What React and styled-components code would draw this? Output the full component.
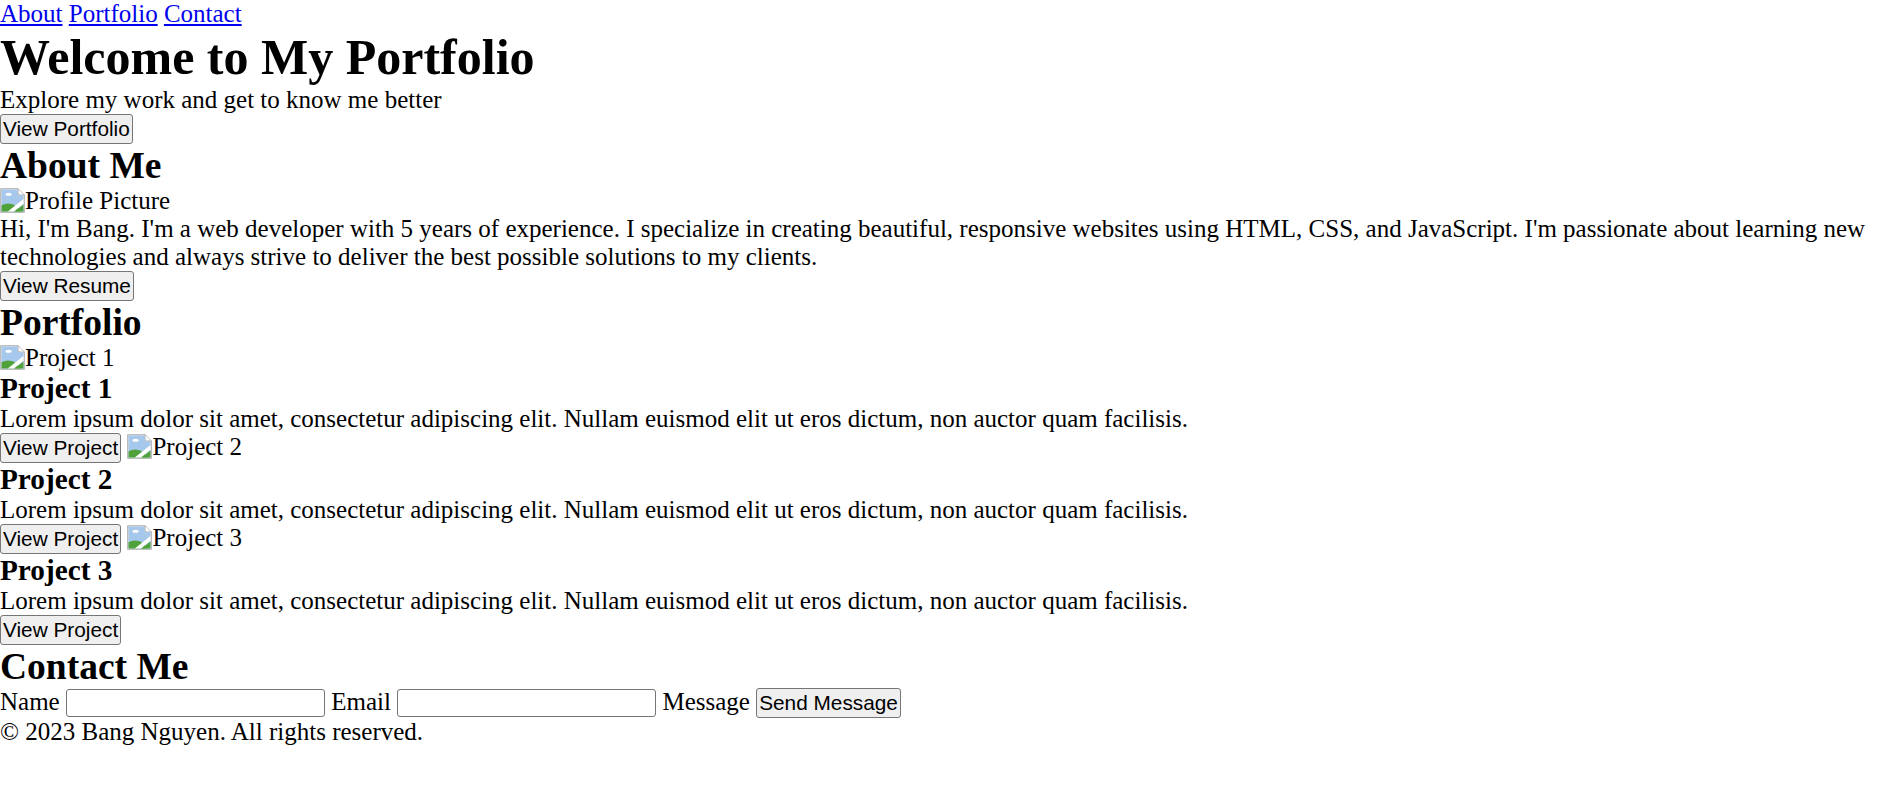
import React from "react";
import styled, { createGlobalStyle } from "styled-components";

const Global = createGlobalStyle`
  * { margin: 0; padding: 0; box-sizing: content-box; }
  html, body { background: #ffffff; }
  body {
    font-family: "Liberation Serif", "Times New Roman", serif;
    font-size: 25px;
    color: #000000;
  }
`;

const Page = styled.div`
  width: 1880px;
`;

const Nav = styled.nav`
  display: block;
`;

const NavLink = styled.a`
  color: #0000ee;
  text-decoration: underline;
`;

const Section = styled.section`
  display: block;
`;

const Title = styled.h1`
  font-size: 50px;
  font-weight: bold;
`;

const Heading = styled.h2`
  font-size: 37.5px;
  font-weight: bold;
`;

const SubHeading = styled.h3`
  font-size: 29.25px;
  font-weight: bold;
`;

const Text = styled.p`
  font-size: 25px;
`;

const Button = styled.button`
  font-family: "Liberation Sans", Arial, sans-serif;
  font-size: 20.8px;
  line-height: normal;
  color: #000000;
  background: #efefef;
  border: 1.5px solid #767676;
  border-radius: 3px;
  padding: 2px 2px;
  cursor: pointer;
`;

const Broken = styled.span`
  display: inline;
  font-size: 25px;
`;

const Glyph = styled.svg`
  width: 25px;
  height: 25px;
  vertical-align: -4px;
`;

const Project = styled.div`
  display: inline;
`;

const Label = styled.label`
  font-size: 25px;
`;

const Input = styled.input`
  font-family: "Liberation Sans", Arial, sans-serif;
  font-size: 20.8px;
  width: 253px;
  height: 24px;
  padding: 1px 2px;
  border: 1.5px solid #767676;
  border-radius: 3px;
  background: #ffffff;
  vertical-align: baseline;
`;

const Footer = styled.footer`
  font-size: 25px;
`;

function BrokenImage({ alt }) {
  return (
    <Broken>
      <Glyph viewBox="0 0 16 16" aria-hidden="true">
        <path d="M0.5 0.5h11l4 4v11h-15z" fill="#f2f2f2" stroke="#a9a9a9" strokeWidth="0.7" />
        <path d="M11.5 0.5v4h4" fill="#ffffff" stroke="#a9a9a9" strokeWidth="0.7" />
        <path d="M1 1h10.3v3.7H15V15H1z" fill="#a6c8ec" />
        <ellipse cx="5.5" cy="4" rx="2" ry="1" fill="#ffffff" />
        <path d="M1 11 Q6 8.5 11 12 L13 15 H1z" fill="#4fa23a" />
        <path d="M5 15 L15 7 L15 10 L9 15z" fill="#ffffff" />
        <path d="M9.5 15 L15 10.5 V15z" fill="#4fa23a" />
      </Glyph>
      {alt}
    </Broken>
  );
}

const projects = [1, 2, 3];

export default function App() {
  return (
    <Page>
      <Global />
      <Nav>
        <NavLink href="#about">About</NavLink> <NavLink href="#portfolio">Portfolio</NavLink>{" "}
        <NavLink href="#contact">Contact</NavLink>
      </Nav>
      <Section>
        <Title>Welcome to My Portfolio</Title>
        <Text>Explore my work and get to know me better</Text>
        <Button>View Portfolio</Button>
      </Section>
      <Section id="about">
        <Heading>About Me</Heading>
        <BrokenImage alt="Profile Picture" />
        <Text>
          Hi, I'm Bang. I'm a web developer with 5 years of experience. I specialize in creating beautiful,
          responsive websites using HTML, CSS, and JavaScript. I'm passionate about learning new technologies and
          always strive to deliver the best possible solutions to my clients.
        </Text>
        <Button>View Resume</Button>
      </Section>
      <Section id="portfolio">
        <Heading>Portfolio</Heading>
        {projects.map((n) => (
          <React.Fragment key={n}>
            <Project>
              <BrokenImage alt={`Project ${n}`} />
              <SubHeading>Project {n}</SubHeading>
              <Text>
                Lorem ipsum dolor sit amet, consectetur adipiscing elit. Nullam euismod elit ut eros dictum, non
                auctor quam facilisis.
              </Text>
              <Button>View Project</Button>
            </Project>{" "}
          </React.Fragment>
        ))}
      </Section>
      <Section id="contact">
        <Heading>Contact Me</Heading>
        <form onSubmit={(e) => e.preventDefault()}>
          <Label>Name</Label> <Input type="text" /> <Label>Email</Label> <Input type="email" />{" "}
          <Label>Message</Label> <Button type="submit">Send Message</Button>
        </form>
      </Section>
      <Footer>© 2023 Bang Nguyen. All rights reserved.</Footer>
    </Page>
  );
}
